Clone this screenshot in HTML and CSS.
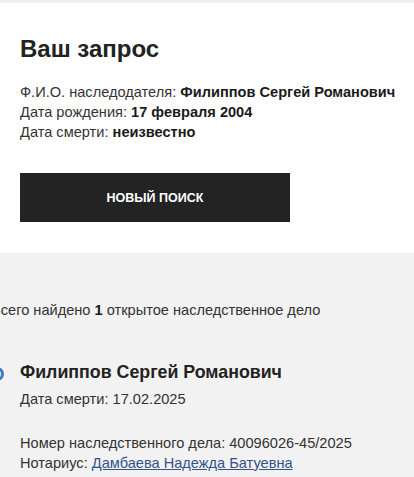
FILE: index.html
```html
<!DOCTYPE html>
<html lang="ru">
<head>
<meta charset="utf-8">
<link rel="stylesheet" href="styles.css">
</head>
<body>
<div class="topstrip"></div>
<section class="request">
  <h1 class="title">Ваш запрос</h1>
  <div class="info">
    <div class="info-line">Ф.И.О. наследодателя: <b>Филиппов Сергей Романович</b></div>
    <div class="info-line">Дата рождения: <b>17 февраля 2004</b></div>
    <div class="info-line">Дата смерти: <b>неизвестно</b></div>
  </div>
  <button class="btn">НОВЫЙ ПОИСК</button>
</section>
<section class="results">
  <div class="summary">Всего найдено <b>1</b> открытое наследственное дело</div>
  <div class="case">
    <span class="dot"></span>
    <div class="case-name">Филиппов Сергей Романович</div>
    <div class="case-date">Дата смерти: 17.02.2025</div>
    <div class="case-meta">
      <div>Номер наследственного дела: 40096026-45/2025</div>
      <div>Нотариус: <a class="link" href="#">Дамбаева Надежда Батуевна</a></div>
    </div>
  </div>
</section>
</body>
</html>
```

FILE: styles.css
```css
html, body {
  margin: 0;
  padding: 0;
}
body {
  font-family: "Liberation Sans", Arial, sans-serif;
  color: #333;
  background: #f2f2f2;
  overflow: hidden;
}
.topstrip {
  height: 3px;
  background: #f0f0f0;
}
.request {
  background: #fff;
  padding: 32px 20px 31px;
}
.title {
  margin: 0;
  font-size: 24px;
  line-height: 28px;
  font-weight: bold;
  color: #222;
}
.info {
  margin-top: 19px;
  font-size: 14.6px;
  line-height: 20px;
  color: #333;
}
.info-line {
  white-space: nowrap;
}
.info b {
  color: #1a1a1a;
}
.btn {
  display: block;
  margin-top: 31px;
  width: 270px;
  height: 49px;
  border: 0;
  background: #232323;
  color: #fff;
  font-family: "Liberation Sans", Arial, sans-serif;
  font-weight: bold;
  font-size: 12.5px;
  padding: 0;
}
.results {
  background: #f2f2f2;
  padding: 47px 20px 20px;
}
.summary {
  margin-left: -29px;
  font-size: 14.6px;
  line-height: 20px;
  color: #333;
  white-space: nowrap;
}
.summary b {
  color: #1a1a1a;
}
.case {
  position: relative;
  margin-top: 40px;
}
.dot {
  position: absolute;
  left: -30px;
  top: 7px;
  width: 8px;
  height: 8px;
  border-radius: 50%;
  border: 3px solid #3e7cc9;
  background: #e3edf8;
}
.case-name {
  font-size: 17.8px;
  line-height: 24px;
  font-weight: bold;
  color: #222;
}
.case-date {
  margin-top: 5px;
  font-size: 14.6px;
  line-height: 20px;
}
.case-meta {
  margin-top: 24px;
  font-size: 14.6px;
  line-height: 20px;
}
.link {
  color: #34528a;
  text-decoration: underline;
}
```
